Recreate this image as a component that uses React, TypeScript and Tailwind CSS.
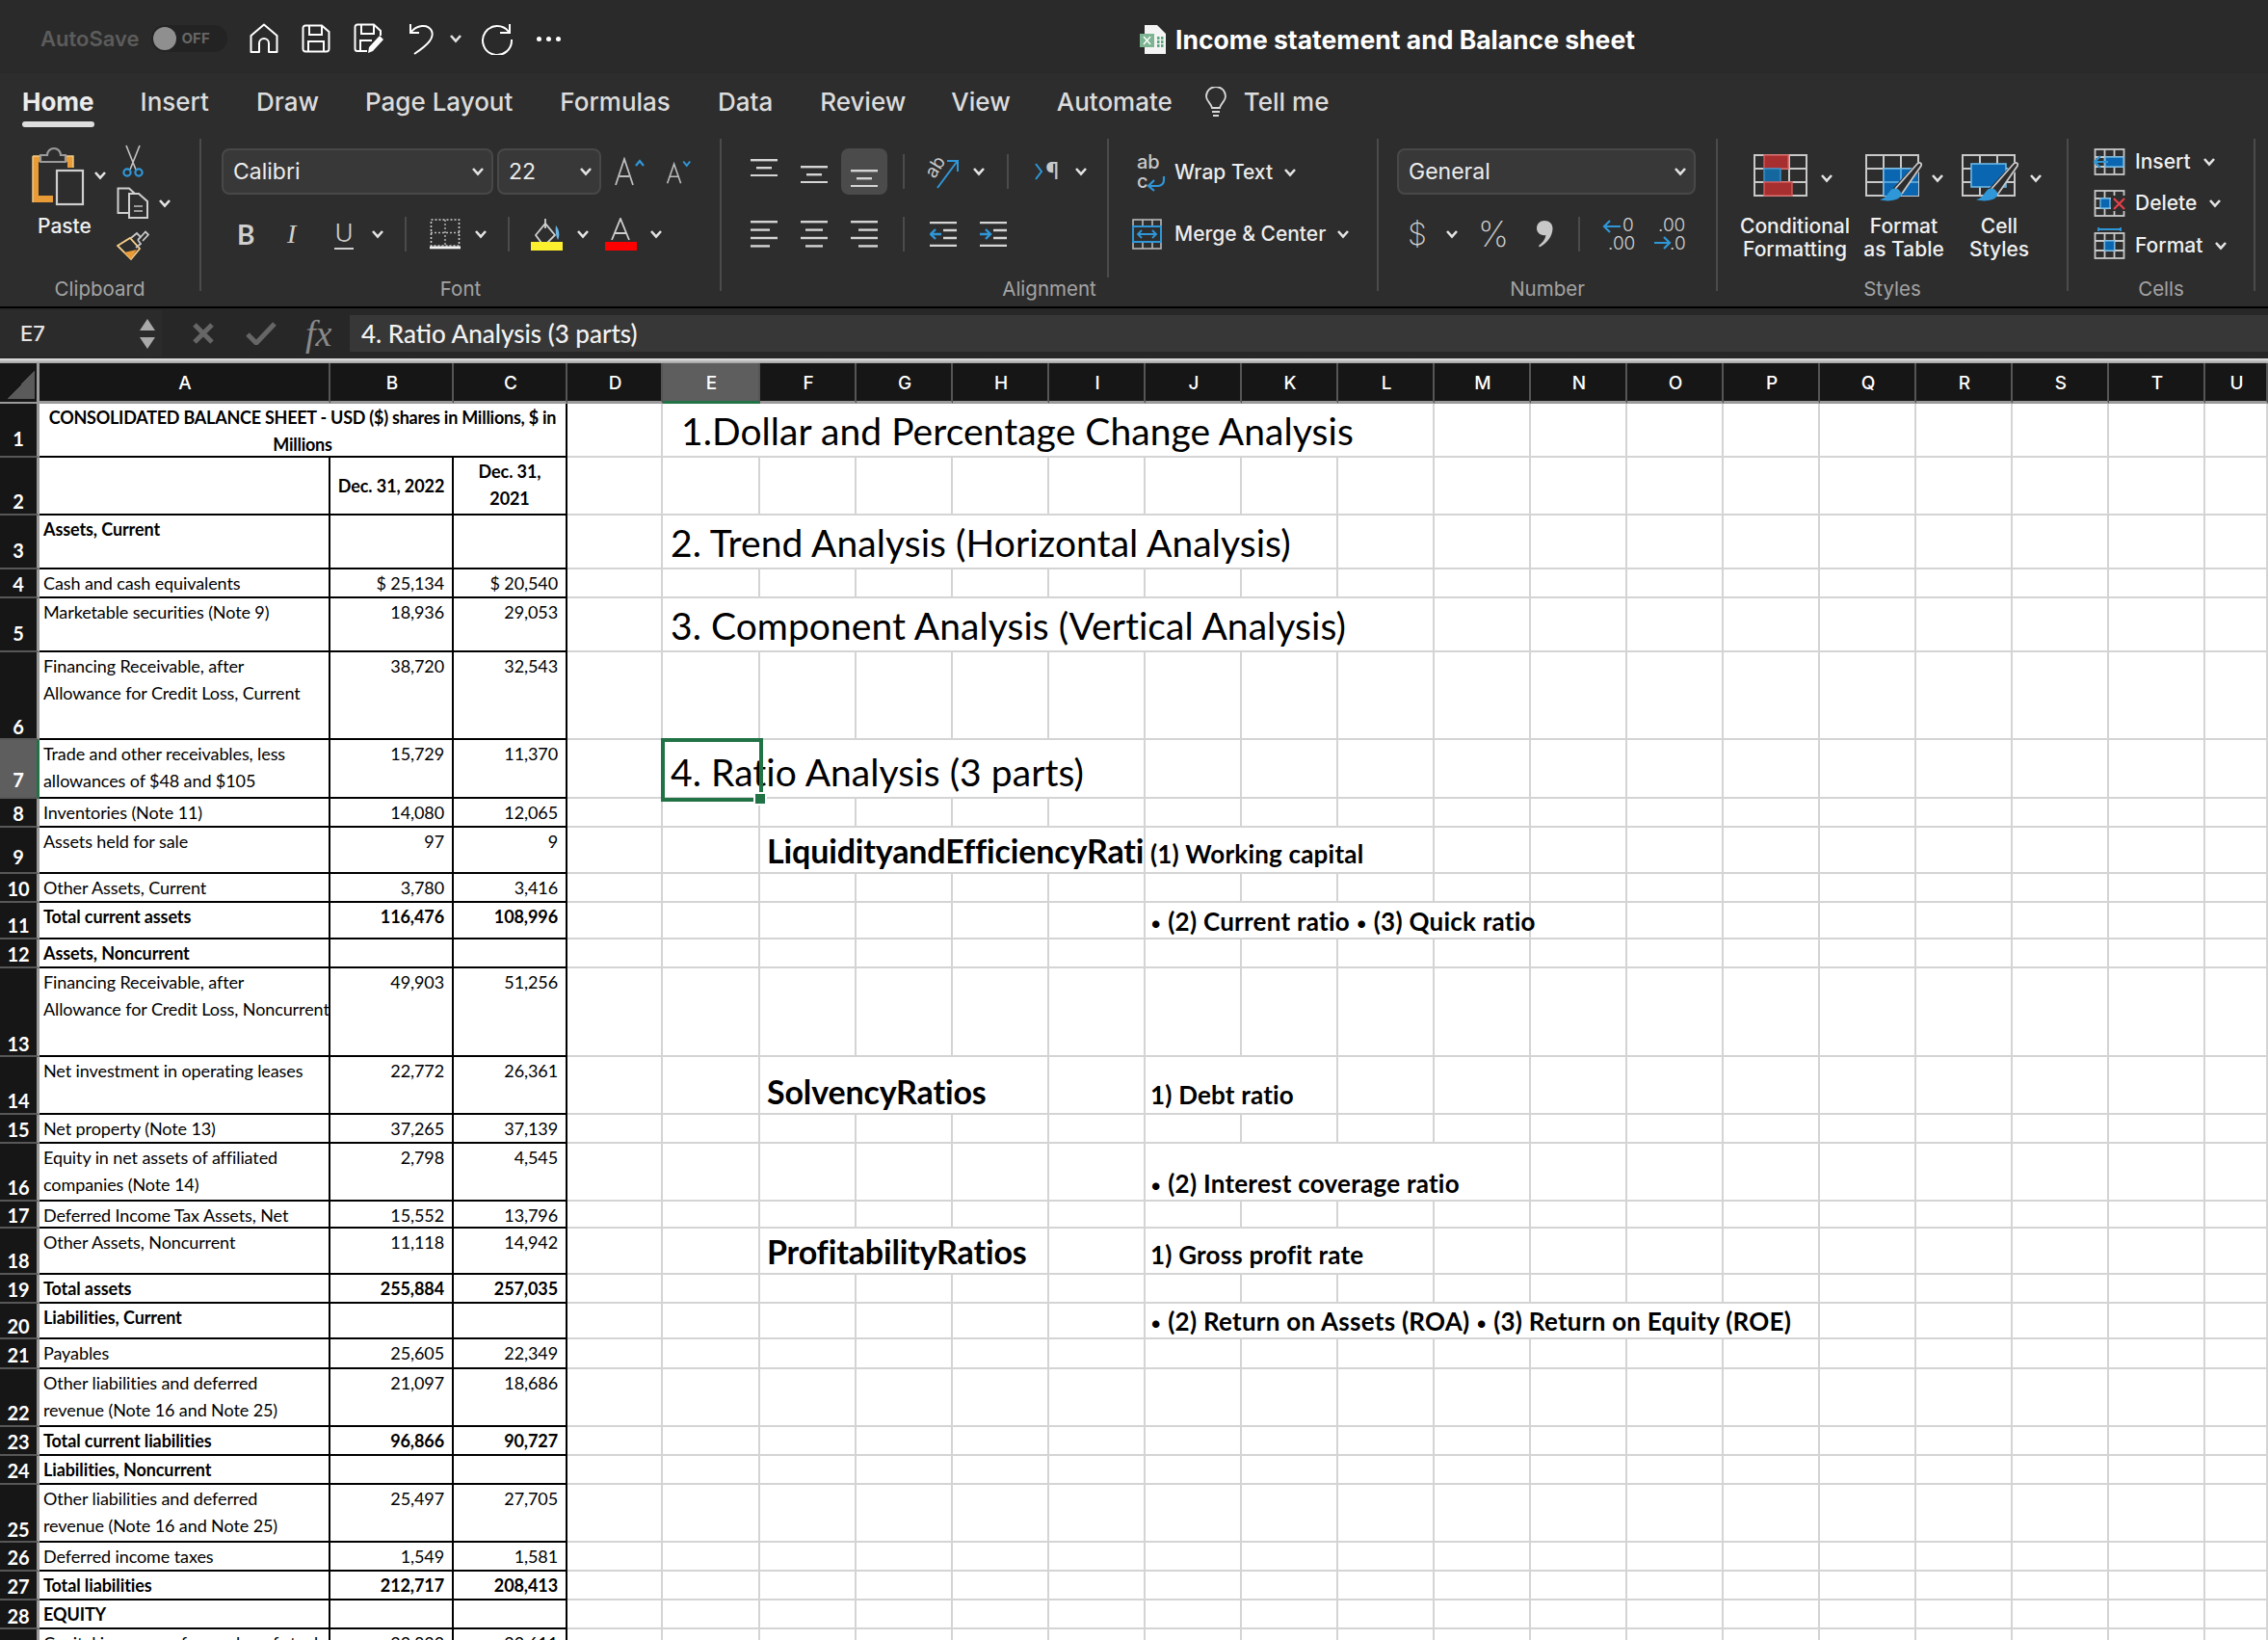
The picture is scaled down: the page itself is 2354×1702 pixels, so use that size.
import React from "react";

const Chev = ({ className = "" }: { className?: string }) => (
  <svg width="14" height="10" viewBox="0 0 14 10" className={"shrink-0 " + className}>
    <path d="M2 2 L7 7.5 L12 2" fill="none" stroke="#e4e4e4" strokeWidth="2.6" />
  </svg>
);

const Sep = ({ className = "" }: { className?: string }) => <div className={"w-[2px] bg-[#4b4b4b] " + className} />;

const Lines = ({ rows, h = 28 }: { rows: [number, number][]; h?: number }) => (
  <svg width="28" height={h} viewBox={`0 0 28 ${h}`} className="shrink-0">
    {rows.map(([x, w], i) => (
      <rect key={i} x={x} y={i * (rows.length === 3 ? 8 : 8.4)} width={w} height="2.4" fill="#d4d4d4" />
    ))}
  </svg>
);

function Home() {
  return (
    <svg width="30" height="32" viewBox="0 0 30 32" fill="none" stroke="#fff" strokeWidth="2">
      <path d="M1.5 13 L15 1.5 L28.5 13 V30 H20 V21 A5 5 0 0 0 10 21 V30 H1.5 Z" strokeLinejoin="round" />
    </svg>
  );
}
function Save() {
  return (
    <svg width="30" height="30" viewBox="0 0 30 30" fill="none" stroke="#fff" strokeWidth="2">
      <path d="M4 1.5 H21 L28.5 8 V26 a2.5 2.5 0 0 1 -2.5 2.5 H4 a2.5 2.5 0 0 1 -2.5 -2.5 V4 a2.5 2.5 0 0 1 2.5 -2.5 Z" />
      <path d="M8 2 V11 H21 V2 M7 28 V18 H23 V28" />
    </svg>
  );
}
function SaveAs() {
  return (
    <svg width="32" height="32" viewBox="0 0 32 32" fill="none" stroke="#fff" strokeWidth="2">
      <path d="M14 29 H4 a2.5 2.5 0 0 1 -2.5 -2.5 V4 a2.5 2.5 0 0 1 2.5 -2.5 H21 L28 8 V13" />
      <path d="M8 2 V11 H21 V2 M7 28 V18 H19" />
      <path d="M15 31 L16 25 L27 13 L31 17 L20 29 Z" fill="#fff" stroke="none" />
    </svg>
  );
}
function Undo() {
  return (
    <svg width="28" height="34" viewBox="0 0 28 34" fill="none" stroke="#fff" strokeWidth="2">
      <path d="M2 2 V11 H11" />
      <path d="M2 11 C8 3 20 1 24 9 C27 16 21 23 6 33" />
    </svg>
  );
}
function Redo() {
  return (
    <svg width="34" height="34" viewBox="0 0 34 34" fill="none" stroke="#fff" strokeWidth="2">
      <path d="M30 2 V11 H20" />
      <path d="M29 10 A15 15 0 1 0 32 18" />
    </svg>
  );
}
function ExcelDoc() {
  return (
    <svg width="28" height="30" viewBox="0 0 28 30">
      <path d="M5 0 H18 L27 9 V30 H5 Z" fill="#f4f4f4" />
      <rect x="0" y="9" width="15" height="14" fill="#7db593" />
      <path d="M4 12 L11 20 M11 12 L4 20" stroke="#fff" strokeWidth="1.4" />
      <path d="M18 12 h2.500 v3 h-2.500z M22 12 h2.500 v3 h-2.500z M18 16 h2.500 v3 h-2.500z M22 16 h2.500 v3 h-2.500z M18 20 h2.500 v3 h-2.500z M22 20 h2.500 v3 h-2.500z" fill="#5ba87b" />
    </svg>
  );
}
function Bulb() {
  return (
    <svg width="24" height="32" viewBox="0 0 24 32" fill="none" stroke="#d8d8d8" strokeWidth="1.8">
      <path d="M8 22 C7 17 2 15 2 10 A10 10 0 0 1 22 10 C22 15 17 17 16 22 Z" />
      <path d="M8 26 H16 M9 30 H15" />
    </svg>
  );
}
function Paste() {
  return (
    <svg width="58" height="62" viewBox="0 0 58 62">
      <path d="M3 10 H45 V22 H39 V16 H9 V51 H24 V58 H3 Z" fill="#e89b37" />
      <path d="M3 10 H45 V22 M3 10 V58" fill="none" stroke="#f6cf8b" strokeWidth="1.4" />
      <path d="M11 16 V9 H18 A7 7 0 0 1 32 9 H37 V16 Z" fill="#2d2d2d" stroke="#9a9a9a" strokeWidth="2.2" />
      <rect x="28" y="25" width="27" height="35" fill="#2d2d2d" stroke="#cfcfcf" strokeWidth="2.2" />
    </svg>
  );
}
function Scissors() {
  return (
    <svg width="22" height="34" viewBox="0 0 22 34" fill="none">
      <path d="M4 1 L14 26 M18 1 L8 26" stroke="#c4c4c4" strokeWidth="1.6" />
      <circle cx="5" cy="29" r="3.6" stroke="#2f97d8" strokeWidth="2.2" />
      <circle cx="17" cy="29" r="3.6" stroke="#2f97d8" strokeWidth="2.2" />
    </svg>
  );
}
function Copy() {
  return (
    <svg width="34" height="34" viewBox="0 0 34 34" fill="none" stroke="#cfcfcf" strokeWidth="2">
      <path d="M13 27 H1.500 V1.500 H13 L19 7" />
      <path d="M13 7 H23 L32 15 V32 H13 Z" fill="#2d2d2d" />
      <path d="M18 20 H27 M18 25 H27" stroke="#9c9c9c" />
    </svg>
  );
}
function Brush() {
  return (
    <svg width="34" height="32" viewBox="0 0 34 32" fill="none">
      <path d="M1 16 L14 8 L24 19 L15 30 Z" stroke="#f6cf8b" strokeWidth="1.8" />
      <path d="M8 23 L21 20 L15 30 Z" fill="#e89b37" />
      <path d="M15 8 L21 3 L25 7 L22 10 M22 10 L25 14 L20 18 M25 7 L30 1.500 L33 4.500 L27 11" stroke="#c8c8c8" strokeWidth="1.8" />
    </svg>
  );
}
function GrowA({ down = false }: { down?: boolean }) {
  return (
    <svg width={down ? 28 : 32} height="30" viewBox="0 0 32 30" fill="none">
      <path d={down ? "M3 29 L11 6 L19 29 M6 21 H16" : "M2 29 L11 2 L20 29 M6 20 H16"} stroke="#bdbdbd" strokeWidth="1.8" />
      <path d={down ? "M22 3 L26 8 L30 3" : "M23 9 L27 4 L31 9"} stroke="#2f97d8" strokeWidth="2.2" />
    </svg>
  );
}
function Borders() {
  return (
    <svg width="32" height="32" viewBox="0 0 32 32" fill="none">
      <rect x="1.500" y="1" width="29" height="27" stroke="#d0d0d0" strokeWidth="1.600" strokeDasharray="2 2" />
      <path d="M1 14.500 H31 M16 1 V28" stroke="#b8b8b8" strokeWidth="1.4" strokeDasharray="2 2" />
      <rect x="0" y="28.500" width="32" height="2.800" fill="#f2f2f2" />
    </svg>
  );
}
function Fill() {
  return (
    <svg width="34" height="34" viewBox="0 0 34 34" fill="none">
      <path d="M5 18 L15 6 L25 18 L17 26 H11 Z" stroke="#cfcfcf" strokeWidth="1.8" />
      <path d="M15 1 V11" stroke="#cfcfcf" strokeWidth="1.8" />
      <path d="M26 8 C30 13 30 19 28 23 C26 19 25 13 26 8 Z" fill="#6bb5e6" />
      <rect x="0" y="25" width="33" height="9" fill="#fdf02f" />
    </svg>
  );
}
function FontColor() {
  return (
    <svg width="34" height="34" viewBox="0 0 34 34" fill="none">
      <path d="M7 23 L16 1 L25 23 M10 16 H22" stroke="#cfcfcf" strokeWidth="1.8" />
      <rect x="0" y="25" width="33" height="9" fill="#ff0000" />
    </svg>
  );
}
function Orientation() {
  return (
    <svg width="36" height="36" viewBox="0 0 36 36" fill="none" className="overflow-visible">
      <path d="M12 35 L32 8 M22 7 H33 V18" stroke="#2f97d8" strokeWidth="2" />
      <text fontSize="19" fill="#c8c8c8" fontFamily="Inter" transform="translate(9 26) rotate(-58)">ab</text>
    </svg>
  );
}
function Rtl() {
  return (
    <div className="flex w-[30px] items-center font-['Inter'] text-[24px] leading-none text-[#c8c8c8]">
      <svg width="10" height="20" viewBox="0 0 10 20" fill="none">
        <path d="M2 2 L8 10 L2 18" stroke="#2f97d8" strokeWidth="2" />
      </svg>
      <span className="ml-[2px]">¶</span>
    </div>
  );
}
function IndentIcon({ inc = false }: { inc?: boolean }) {
  return (
    <svg width="28" height="26" viewBox="0 0 28 26" fill="none">
      <path d="M0 1 H28 M14 9 H28 M14 17 H28 M0 25 H28" stroke="#d4d4d4" strokeWidth="2.4" />
      <path d={inc ? "M0 13 H11 M6 8 L11 13 L6 18" : "M12 13 H1 M6 8 L1 13 L6 18"} stroke="#2f97d8" strokeWidth="2.4" />
    </svg>
  );
}
function WrapIcon() {
  return (
    <svg width="32" height="38" viewBox="0 0 32 38" fill="none" className="overflow-visible">
      <text x="1" y="15" fontSize="20" fill="#c8c8c8" fontFamily="Inter">ab</text>
      <text x="1" y="35" fontSize="20" fill="#c8c8c8" fontFamily="Inter">c</text>
      <path d="M29 23 V27 A6 6 0 0 1 23 33 H14 M19 27 L13 33 L19 38" stroke="#2f97d8" strokeWidth="2.2" />
    </svg>
  );
}
function MergeIcon() {
  return (
    <svg width="32" height="32" viewBox="0 0 32 32" fill="none">
      <rect x="1" y="1" width="29" height="30" stroke="#b8b8b8" strokeWidth="1.6" />
      <path d="M11 1 V8 M21 1 V8 M11 24 V31 M21 24 V31" stroke="#b8b8b8" strokeWidth="1.6" />
      <rect x="1" y="8" width="29" height="16" fill="#2d2d2d" stroke="#2f97d8" strokeWidth="2" />
      <path d="M6 16 H25 M10 12 L6 16 L10 20 M21 12 L25 16 L21 20" stroke="#2f97d8" strokeWidth="1.8" />
    </svg>
  );
}
function DecimalIcon({ inc = false }: { inc?: boolean }) {
  return (
    <svg width="36" height="38" viewBox="0 0 36 38" fill="none" fontFamily="Inter" fontSize="19" fontWeight="300" className="overflow-visible">
      {inc ? (
        <>
          <path d="M20 11 H3 M9 5 L3 11 L9 17" stroke="#2f97d8" strokeWidth="2.200" />
          <text x="22" y="16" fill="#d0d0d0">0</text>
          <text x="7" y="35" fill="#d0d0d0">.00</text>
        </>
      ) : (
        <>
          <text x="7" y="16" fill="#d0d0d0">.00</text>
          <path d="M3 28 H19 M13 22 L19 28 L13 34" stroke="#2f97d8" strokeWidth="2.200" />
          <text x="19" y="35" fill="#d0d0d0">.0</text>
        </>
      )}
    </svg>
  );
}
function Comma() {
  return (
    <svg width="17" height="28" viewBox="0 0 17 28">
      <path d="M8 0 C13 0 16.500 3 16.500 8 C16.500 16 11 23 3 27.500 L2 26 C6 23 9 19 9.500 15 C4 16 0 12.500 0 8 C0 3 3.500 0 8 0 Z" fill="#c8c8c8" />
    </svg>
  );
}
const CellGrid = ({ children }: { children?: React.ReactNode }) => (
  <svg width="60" height="50" viewBox="0 0 60 50" fill="none">
    <rect x="1" y="1" width="54" height="42" stroke="#c8c8c8" strokeWidth="2" />
    <path d="M1 15 H55 M1 29 H55 M19 1 V43 M37 1 V43" stroke="#c8c8c8" strokeWidth="2" />
    {children}
  </svg>
);
const BrushOver = () => (
  <>
    <path d="M29 41 L57 11" stroke="#2d2d2d" strokeWidth="8" />
    <path d="M31 36 L54 10 C56 8 59 9 58 12 L38 41" stroke="#c8c8c8" strokeWidth="1.8" fill="#2d2d2d" />
    <path d="M15 47 C22 46 23 40 28 36 C33 34 38 38 37 43 C35 48 23 50 15 47 Z" fill="#2f97d8" />
  </>
);
function CondIcon() {
  return (
    <CellGrid>
      <rect x="11" y="1" width="25" height="14" fill="#a82f30" stroke="#d75a5a" strokeWidth="1.4" />
      <rect x="11" y="15" width="17" height="14" fill="#14689f" stroke="#3d95cb" strokeWidth="1.4" />
      <rect x="11" y="29" width="29" height="14" fill="#a82f30" stroke="#d75a5a" strokeWidth="1.4" />
    </CellGrid>
  );
}
function TableIcon() {
  return (
    <CellGrid>
      <rect x="19" y="15" width="36" height="28" fill="#0a66b0" />
      <path d="M19 15 H55 M19 29 H55 M37 15 V43 M19 15 V43" stroke="#6cb7e6" strokeWidth="1.600" />
      <BrushOver />
    </CellGrid>
  );
}
function StyleIcon() {
  return (
    <CellGrid>
      <rect x="10" y="10" width="36" height="24" fill="#0a66b0" stroke="#6cb7e6" strokeWidth="1.600" />
      <BrushOver />
    </CellGrid>
  );
}
const MiniGrid = ({ children }: { children?: React.ReactNode }) => (
  <svg width="34" height="32" viewBox="0 0 34 32" fill="none" className="shrink-0 overflow-visible">
    <rect x="1.500" y="3" width="30" height="26" stroke="#c8c8c8" strokeWidth="1.800" />
    <path d="M1 11 H32 M1 21 H32 M11.500 3 V29 M21.500 3 V29" stroke="#c8c8c8" strokeWidth="1.800" />
    {children}
  </svg>
);
const InsertIc = () => (
  <MiniGrid>
    <rect x="12" y="11" width="19" height="10" fill="#0a66b0" stroke="#6cb7e6" strokeWidth="1.400" />
    <path d="M15 16 H1 M7 10 L1 16 L7 22" stroke="#2f97d8" strokeWidth="2.200" />
  </MiniGrid>
);
const DeleteIc = () => (
  <MiniGrid>
    <rect x="18" y="8" width="16" height="16" fill="#2d2d2d" />
    <rect x="7" y="11" width="10" height="10" fill="#0a66b0" stroke="#6cb7e6" strokeWidth="1.400" />
    <path d="M21 11 L32 22 M32 11 L21 22" stroke="#e5404a" strokeWidth="2.200" />
  </MiniGrid>
);
const FormatIc = () => (
  <MiniGrid>
    <rect x="11.500" y="11" width="10" height="10" fill="#0a66b0" stroke="#6cb7e6" strokeWidth="1.200" />
    <path d="M5 -1 H28 M5 -3 V1 M28 -3 V1" stroke="#2f97d8" strokeWidth="1.800" />
  </MiniGrid>
);

const Combo = ({ text, w, ml = "" }: { text: string; w: string; ml?: string }) => (
  <div className={"flex h-[48px] items-center justify-between rounded-lg border-2 border-[#484848] bg-[#383838] pl-[10px] pr-[7px] font-['Inter'] text-[23px] text-[#ececec] " + w + " " + ml}>
    <span>{text}</span>
    <Chev />
  </div>
);

const groupLabel = "-mb-[10px] text-center text-[20.500px] leading-[24px] text-[#a3a3a3]";

const Group = ({ w, label, children }: { w: string; label: string; children: React.ReactNode }) => (
  <div className={"flex h-full shrink-0 flex-col border-r-2 border-[#4b4b4b] " + w}>
    <div className="min-h-0 flex-1">{children}</div>
    <div className={groupLabel}>{label}</div>
  </div>
);

type Row = [string, string, string, boolean?];
const tableRows: Record<number, Row> = {
  3: ["Assets, Current", "", "", true],
  4: ["Cash and cash equivalents", "$ 25,134", "$ 20,540"],
  5: ["Marketable securities (Note 9)", "18,936", "29,053"],
  6: ["Financing Receivable, after\nAllowance for Credit Loss, Current", "38,720", "32,543"],
  7: ["Trade and other receivables, less\nallowances of $48 and $105", "15,729", "11,370"],
  8: ["Inventories (Note 11)", "14,080", "12,065"],
  9: ["Assets held for sale", "97", "9"],
  10: ["Other Assets, Current", "3,780", "3,416"],
  11: ["Total current assets", "116,476", "108,996", true],
  12: ["Assets, Noncurrent", "", "", true],
  13: ["Financing Receivable, after\nAllowance for Credit Loss, Noncurrent", "49,903", "51,256"],
  14: ["Net investment in operating leases", "22,772", "26,361"],
  15: ["Net property (Note 13)", "37,265", "37,139"],
  16: ["Equity in net assets of affiliated\ncompanies (Note 14)", "2,798", "4,545"],
  17: ["Deferred Income Tax Assets, Net", "15,552", "13,796"],
  18: ["Other Assets, Noncurrent", "11,118", "14,942"],
  19: ["Total assets", "255,884", "257,035", true],
  20: ["Liabilities, Current", "", "", true],
  21: ["Payables", "25,605", "22,349"],
  22: ["Other liabilities and deferred\nrevenue (Note 16 and Note 25)", "21,097", "18,686"],
  23: ["Total current liabilities", "96,866", "90,727", true],
  24: ["Liabilities, Noncurrent", "", "", true],
  25: ["Other liabilities and deferred\nrevenue (Note 16 and Note 25)", "25,497", "27,705"],
  26: ["Deferred income taxes", "1,549", "1,581"],
  27: ["Total liabilities", "212,717", "208,413", true],
  28: ["EQUITY", "", "", true],
  29: ["Capital in excess of par value of stock", "22,832", "22,611"],
};

type Span = { col: number; n: number; span: string; text: string; cls: string };
const big = "items-end text-[39px] leading-[52px] tracking-[0.05px]";
const head = "items-end font-bold text-[34px] leading-[44px] tracking-[-0.15px]";
const sub = "items-end font-bold text-[26px] leading-[38px] tracking-[0.2px]";
const subB = "items-end font-bold text-[26px] leading-[33px] tracking-[0.25px]";
const right: Record<number, Span[]> = {
  1: [{ col: 1, n: 8, span: "col-span-8", text: " 1.Dollar and Percentage Change Analysis", cls: big + " pl-[9px]" }],
  3: [{ col: 1, n: 7, span: "col-span-7", text: "2. Trend Analysis (Horizontal Analysis)", cls: big + " pl-[8px]" }],
  5: [{ col: 1, n: 8, span: "col-span-8", text: "3. Component Analysis (Vertical Analysis)", cls: big + " pl-[8px]" }],
  7: [{ col: 1, n: 5, span: "col-span-5", text: "4. Ratio Analysis (3 parts)", cls: big + " pl-[8px]" }],
  9: [
    { col: 2, n: 4, span: "col-span-4", text: "LiquidityandEfficiencyRatios", cls: head + " pl-[7px] overflow-hidden" },
    { col: 6, n: 3, span: "col-span-3", text: "(1) Working capital", cls: sub + " pl-[5px]" },
  ],
  11: [{ col: 6, n: 4, span: "col-span-4", text: "• (2) Current ratio • (3) Quick ratio", cls: subB + " pl-[5px]" }],
  14: [
    { col: 2, n: 3, span: "col-span-3", text: "SolvencyRatios", cls: head + " pl-[7px]" },
    { col: 6, n: 2, span: "col-span-2", text: "1) Debt ratio", cls: sub + " pl-[5px]" },
  ],
  16: [{ col: 6, n: 4, span: "col-span-4", text: "• (2) Interest coverage ratio", cls: subB + " pl-[5px]" }],
  18: [
    { col: 2, n: 3, span: "col-span-3", text: "ProfitabilityRatios", cls: head + " pl-[7px]" },
    { col: 6, n: 3, span: "col-span-3", text: "1) Gross profit rate", cls: sub + " pl-[5px]" },
  ],
  20: [{ col: 6, n: 7, span: "col-span-7", text: "• (2) Return on Assets (ROA) • (3) Return on Equity (ROE)", cls: subB + " pl-[5px]" }],
};

const letters = "ABCDEFGHIJKLMNOPQRSTU".split("");
const numRows = Array.from({ length: 29 }, (_, i) => i + 1);
const tableCell = "border-r-2 border-b-2 border-black";

const headPos: Record<number, string> = {
  1: "pb-[5px] leading-[26px]",
  3: "pb-[5px] leading-[26px]",
  5: "pb-[5px] leading-[26px]",
  7: "pb-[5px] leading-[26px]",
  9: "pb-[3px] leading-[26px]",
  6: "leading-[24px]",
  13: "leading-[24px]",
  17: "leading-[24px]",
  20: "leading-[24px]",
  25: "leading-[24px]",
  28: "leading-[24px]",
};

function RowHead({ n }: { n: number }) {
  return (
    <div className={"flex items-end justify-center border-b-2 border-[#575757] text-[20px] font-bold tracking-normal text-white " + (headPos[n] || "leading-[26px]") + " " + (n === 7 ? "border-r-[3px] border-r-[#217346] bg-[#5e5e5e]" : "border-r-[3px] border-r-[#9a9a9a] bg-[#161616]")}>
      {n}
    </div>
  );
}

function Bulleted({ text }: { text: string }) {
  if (!text.includes("•")) return <span>{text}</span>;
  const parts = text.split("•");
  return (
    <span>
      {parts.map((p, i) => (
        <React.Fragment key={i}>
          {i > 0 && <span className="font-['Inter'] text-[24px] leading-none">•</span>}
          {p}
        </React.Fragment>
      ))}
    </span>
  );
}

function RightCells({ r }: { r: number }) {
  const out: React.ReactNode[] = [];
  const spans = right[r] || [];
  for (let i = 0; i < 18; i++) {
    const s = spans.find((x) => x.col === i);
    if (s) {
      out.push(
        <div key={i} className={"relative flex whitespace-pre border-r-2 border-b-2 border-[#d4d4d4] text-black " + s.span + " " + s.cls}>
          <Bulleted text={s.text} />
          {r === 7 && i === 1 && (
            <>
              <div className="absolute left-[-2px] top-[-2px] h-[66px] w-[106px] border-[4px] border-[#217346]" />
              <div className="absolute left-[94px] top-[54px] h-[14px] w-[14px] border-2 border-white bg-[#217346]" />
            </>
          )}
        </div>
      );
      i += s.n - 1;
    } else {
      out.push(<div key={i} className="border-r-2 border-b-2 border-[#d4d4d4]" />);
    }
  }
  return <>{out}</>;
}

export default function App() {
  return (
    <div className="flex h-[1702px] w-[2354px] flex-col overflow-hidden bg-white font-['Inter']">
      {/* title bar */}
      <div className="relative flex h-[76px] shrink-0 items-center bg-[#2a2a2a] pl-[42px] pt-[4px]">
        <span className="text-[22px] font-semibold text-[#5c5c5c]">AutoSave</span>
        <div className="ml-[12px] flex h-[28px] w-[79px] items-center rounded-full bg-[#232323] pl-[2px]">
          <div className="h-[24px] w-[24px] rounded-full bg-[#8f8f8f]" />
          <span className="ml-[6px] text-[15px] font-bold text-[#676767]">OFF</span>
        </div>
        <div className="ml-[23px]"><Home /></div>
        <div className="ml-[24px]"><Save /></div>
        <div className="ml-[24px]"><SaveAs /></div>
        <div className="ml-[25px]"><Undo /></div>
        <Chev className="ml-[14px]" />
        <div className="ml-[19px]"><Redo /></div>
        <div className="ml-[24px] flex gap-[5px]">
          <i className="h-[5px] w-[5px] rounded-full bg-white" />
          <i className="h-[5px] w-[5px] rounded-full bg-white" />
          <i className="h-[5px] w-[5px] rounded-full bg-white" />
        </div>
        <div className="absolute left-[1183px] top-[25px] flex items-center gap-[9px]">
          <ExcelDoc />
          <span className="text-[26.500px] font-bold leading-[32px] text-white">Income statement and Balance sheet</span>
        </div>
      </div>

      {/* ribbon */}
      <div className="flex h-[242px] shrink-0 flex-col bg-[#2d2d2d]">
        <div className="flex h-[68px] shrink-0 items-start gap-[49px] pl-[23px] pt-[14px] text-[26px] font-medium leading-[32px] text-[#dcdcdc]">
          <div className="relative font-bold text-[#ececec]">
            Home
            <div className="absolute left-0 right-0 top-[36px] h-[6px] rounded-full bg-[#dedede]" />
          </div>
          <span className="-ml-[1px]">Insert</span>
          <span>Draw</span>
          <span className="-ml-[1px]">Page Layout</span>
          <span>Formulas</span>
          <span>Data</span>
          <span>Review</span>
          <span className="-ml-[2px]">View</span>
          <span className="-ml-[1px]">Automate</span>
          <div className="-ml-[16px] flex items-center gap-[17px]">
            <Bulb />
            <span>Tell me</span>
          </div>
        </div>
        <div className="flex h-[158px] shrink-0">
          {/* clipboard */}
          <Group w="w-[209px]" label="Clipboard">
            <div className="flex">
              <div className="ml-[31px] mt-[8px] flex w-[62px] flex-col">
                <Paste />
                <span className="mt-[7px] ml-[8px] text-[21px] font-medium leading-[28px] text-[#f0f0f0]">Paste</span>
              </div>
              <Chev className="ml-[4px] mt-[33px]" />
              <div className="ml-[10px] flex flex-col">
                <div className="ml-[6px] mt-[6px]"><Scissors /></div>
                <div className="mt-[10px] flex items-center gap-[9px]"><Copy /><Chev /></div>
                <div className="mt-[11px]"><Brush /></div>
              </div>
            </div>
          </Group>
          {/* font */}
          <Group w="w-[540px]" label="Font">
            <div className="flex items-center pl-[21px] pt-[10px]">
              <Combo text="Calibri" w="w-[282px]" />
              <Combo text="22" w="w-[108px]" ml="ml-[4px]" />
              <div className="ml-[13px]"><GrowA /></div>
              <div className="ml-[21px]"><GrowA down /></div>
            </div>
            <div className="mt-[23px] flex h-[36px] items-center text-[#cfcfcf]">
              <span className="ml-[37px] w-[22px] font-['Lato'] text-[28px] font-bold">B</span>
              <span className="ml-[30px] w-[14px] font-['Liberation_Serif'] text-[28px] italic">I</span>
              <span className="ml-[35px] w-[20px] border-b-[2px] border-[#cfcfcf] text-center text-[26px] font-light leading-[30px]">U</span>
              <Chev className="ml-[18px]" />
              <Sep className="ml-[21px] h-[36px]" />
              <div className="ml-[24px]"><Borders /></div>
              <Chev className="ml-[14px]" />
              <Sep className="ml-[21px] h-[36px]" />
              <div className="ml-[22px]"><Fill /></div>
              <Chev className="ml-[13px]" />
              <div className="ml-[16px]"><FontColor /></div>
              <Chev className="ml-[12px]" />
            </div>
          </Group>
          {/* alignment */}
          <div className="flex h-full w-[682px] shrink-0 flex-col border-r-2 border-[#4b4b4b]">
            <div className="flex min-h-0 flex-1">
              <div className="h-[144px] w-[402px] shrink-0 border-r-2 border-[#4b4b4b]">
                <div className="mt-[10px] flex h-[48px] items-center pl-[30px]">
                  <div className="mt-[-8px] h-[18px] overflow-hidden"><Lines rows={[[0, 28], [6, 16], [0, 28]]} /></div>
                  <div className="ml-[24px] mt-[6px] h-[18px] overflow-hidden"><Lines rows={[[0, 28], [6, 16], [0, 28]]} /></div>
                  <div className="ml-[14px] flex h-[48px] w-[48px] items-end justify-center rounded-lg bg-[#4b4b4b] pb-[8px]">
                    <div className="h-[18px] overflow-hidden"><Lines rows={[[0, 28], [6, 16], [0, 28]]} /></div>
                  </div>
                  <Sep className="ml-[16px] h-[36px]" />
                  <div className="ml-[22px]"><Orientation /></div>
                  <Chev className="ml-[12px]" />
                  <Sep className="ml-[22px] h-[36px]" />
                  <div className="ml-[26px]"><Rtl /></div>
                  <Chev className="ml-[12px]" />
                </div>
                <div className="mt-[23px] flex h-[36px] items-center pl-[30px]">
                  <Lines rows={[[0, 28], [0, 20], [0, 28], [0, 20]]} />
                  <div className="ml-[24px]"><Lines rows={[[0, 28], [5, 18], [0, 28], [5, 18]]} /></div>
                  <div className="ml-[24px]"><Lines rows={[[0, 28], [8, 20], [0, 28], [8, 20]]} /></div>
                  <Sep className="ml-[26px] h-[36px]" />
                  <div className="ml-[26px]"><IndentIcon /></div>
                  <div className="ml-[24px]"><IndentIcon inc /></div>
                </div>
              </div>
              <div className="flex flex-col text-[21px] font-medium leading-[28px] text-[#ececec]">
                <div className="ml-[28px] mt-[16px] flex h-[38px] items-center">
                  <WrapIcon />
                  <span className="ml-[8px]">Wrap Text</span>
                  <Chev className="ml-[11px]" />
                </div>
                <div className="ml-[24px] mt-[27px] flex h-[36px] items-center">
                  <MergeIcon />
                  <span className="ml-[12px]">Merge & Center</span>
                  <Chev className="ml-[11px]" />
                </div>
              </div>
            </div>
            <div className={groupLabel}>Alignment</div>
          </div>
          {/* number */}
          <Group w="w-[352px]" label="Number">
            <div className="pl-[19px] pt-[10px]"><Combo text="General" w="w-[310px]" /></div>
            <div className="mt-[23px] flex h-[36px] items-center text-[#cfcfcf]">
              <span className="ml-[30px] w-[20px] text-[32px] font-extralight leading-none">$</span>
              <Chev className="ml-[19px]" />
              <span className="ml-[20px] text-[36px] font-extralight leading-none">%</span>
              <div className="ml-[29px]"><Comma /></div>
              <Sep className="ml-[26px] h-[36px]" />
              <div className="ml-[22px]"><DecimalIcon inc /></div>
              <div className="ml-[16px]"><DecimalIcon /></div>
            </div>
          </Group>
          {/* styles */}
          <Group w="w-[364px]" label="Styles">
            <div className="flex pt-[16px]">
              <div className="ml-[37px] w-[60px]"><CondIcon /></div>
              <Chev className="ml-[9px] mt-[20px]" />
              <div className="ml-[33px] w-[60px]"><TableIcon /></div>
              <Chev className="ml-[8px] mt-[20px]" />
              <div className="ml-[18px] w-[60px]"><StyleIcon /></div>
              <Chev className="ml-[10px] mt-[20px]" />
            </div>
            <div className="mt-[13px] flex text-center text-[21px] font-medium leading-[24px] text-[#f0f0f0]">
              <div className="ml-[20px] w-[120px]">Conditional<br />Formatting</div>
              <div className="ml-[8px] w-[90px]">Format<br />as Table</div>
              <div className="ml-[11px] w-[86px]">Cell<br />Styles</div>
            </div>
          </Group>
          {/* cells */}
          <Group w="w-[194px]" label="Cells">
            <div className="flex flex-col pl-[26px] pt-[8px] text-[21px] font-medium leading-[28px] text-[#f0f0f0]">
              <div className="flex h-[32px] items-center gap-[9px]"><InsertIc /><span>Insert</span><Chev className="ml-[3px]" /></div>
              <div className="mt-[11px] flex h-[32px] items-center gap-[9px]"><DeleteIc /><span>Delete</span><Chev className="ml-[3px]" /></div>
              <div className="mt-[12px] flex h-[32px] items-center gap-[9px]"><FormatIc /><span>Format</span><Chev className="ml-[3px]" /></div>
            </div>
          </Group>
        </div>
      </div>
      <div className="h-[2px] shrink-0 bg-black" />

      {/* formula bar */}
      <div className="flex h-[52px] shrink-0 items-center bg-[#272727]">
        <div className="flex h-[48px] w-[168px] shrink-0 items-center justify-between bg-[#2b2b2b] pl-[21px] pr-[7px] text-[22px] font-medium text-[#e4e4e4]">
          <span>E7</span>
          <div className="flex flex-col gap-[7px]">
            <div className="h-0 w-0 border-x-[8px] border-b-[12px] border-x-transparent border-b-[#a9a9a9]" />
            <div className="h-0 w-0 border-x-[8px] border-t-[12px] border-x-transparent border-t-[#a9a9a9]" />
          </div>
        </div>
        <svg width="24" height="24" viewBox="0 0 24 24" className="ml-[31px] shrink-0" fill="none">
          <path d="M3 3 L21 21 M21 3 L3 21" stroke="#666" strokeWidth="5" />
        </svg>
        <svg width="32" height="24" viewBox="0 0 32 24" className="ml-[32px] shrink-0" fill="none">
          <path d="M2 13 L11 22 L30 2" stroke="#666" strokeWidth="5" />
        </svg>
        <span className="ml-[30px] w-[32px] shrink-0 font-['Liberation_Serif'] text-[38px] italic leading-none text-[#8a8a8a]">fx</span>
        <div className="ml-[14px] flex h-[38px] flex-1 items-center bg-[#373737] pl-[12px] font-['Lato'] text-[26px] font-medium text-[#f2f2f2]">
          4. Ratio Analysis (3 parts)
        </div>
      </div>
      <div className="h-[5px] shrink-0 bg-gradient-to-b from-[#e8e8e8] to-[#9e9e9e]" />

      {/* sheet */}
      <div className="grid min-h-0 flex-1 grid-cols-[41px_302px_128px_118px_99px_101px_repeat(15,100px)_65px] grid-rows-[42px_56px_60px_56px_30px_56px_91px_61px_30px_48px_30px_38px_30px_92px_60px_30px_60px_28px_48px_30px_37px_31px_60px_30px_30px_60px_30px_30px_30px_60px] overflow-hidden font-['Lato'] text-[18px] leading-[28px] tracking-[-0.1px] text-black [font-variant-ligatures:none]">
        <div className="flex items-end border-r-[3px] border-b-2 border-r-[#9a9a9a] border-b-[#9a9a9a] bg-[#161616] pb-[3px] pl-[8px]">
          <div className="h-[30px] w-[28px] bg-gradient-to-br from-transparent from-50% to-[#5a5a5a] to-50%" />
        </div>
        {letters.map((l) => (
          <div key={l} className={"flex items-center justify-center border-b-[3px] border-r-2 border-r-[#555] pl-[2px] pt-[3px] font-['Inter'] text-[19px] font-medium tracking-normal text-white " + (l === "E" ? "border-b-[#217346] bg-[#5e5e5e]" : "border-b-[#9a9a9a] bg-[#161616]")}>
            {l}
          </div>
        ))}
        {numRows.map((r) => {
          if (r === 1)
            return (
              <React.Fragment key={r}>
                <RowHead n={1} />
                <div className={"col-span-3 text-center font-bold tracking-[-0.25px] " + tableCell}>
                  CONSOLIDATED BALANCE SHEET - USD ($) shares in Millions, $ in
                  <br />
                  Millions
                </div>
                <RightCells r={1} />
              </React.Fragment>
            );
          if (r === 2)
            return (
              <React.Fragment key={r}>
                <RowHead n={2} />
                <div className={tableCell} />
                <div className={"flex items-center justify-center font-bold " + tableCell}>Dec. 31, 2022</div>
                <div className={"text-center font-bold " + tableCell}>
                  Dec. 31,
                  <br />
                  2021
                </div>
                <RightCells r={2} />
              </React.Fragment>
            );
          const [a, b, c, bold] = tableRows[r];
          const w = bold ? "font-bold" : "";
          return (
            <React.Fragment key={r}>
              <RowHead n={r} />
              <div className={"whitespace-pre pl-[4px] " + tableCell + " " + w}>{a}</div>
              <div className={"pr-[8px] text-right " + tableCell + " " + w}>{b}</div>
              <div className={"pr-[8px] text-right " + tableCell + " " + w}>{c}</div>
              <RightCells r={r} />
            </React.Fragment>
          );
        })}
      </div>
    </div>
  );
}
